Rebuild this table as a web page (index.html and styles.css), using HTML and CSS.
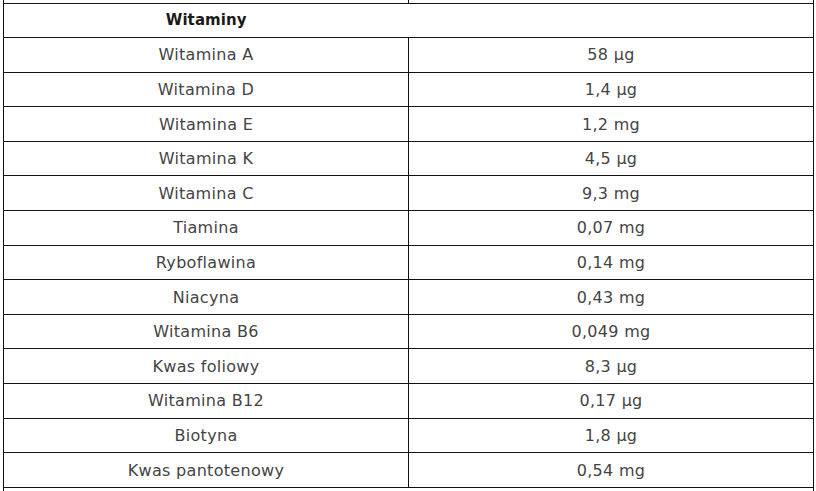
FILE: index.html
```html
<!DOCTYPE html>
<html lang="pl">
<head>
<meta charset="utf-8">
<title>Witaminy</title>
<link rel="stylesheet" href="styles.css">
</head>
<body>
<div class="wrap">
<table class="nutri">
  <tr class="stub"><td></td><td></td></tr>
  <tr class="head"><th class="noline">Witaminy</th><th></th></tr>
  <tr><td>Witamina A</td><td>58 µg</td></tr>
  <tr><td>Witamina D</td><td>1,4 µg</td></tr>
  <tr><td>Witamina E</td><td>1,2 mg</td></tr>
  <tr><td>Witamina K</td><td>4,5 µg</td></tr>
  <tr><td>Witamina C</td><td>9,3 mg</td></tr>
  <tr><td>Tiamina</td><td>0,07 mg</td></tr>
  <tr><td>Ryboflawina</td><td>0,14 mg</td></tr>
  <tr><td>Niacyna</td><td>0,43 mg</td></tr>
  <tr><td>Witamina B6</td><td>0,049 mg</td></tr>
  <tr><td>Kwas foliowy</td><td>8,3 µg</td></tr>
  <tr><td>Witamina B12</td><td>0,17 µg</td></tr>
  <tr><td>Biotyna</td><td>1,8 µg</td></tr>
  <tr><td>Kwas pantotenowy</td><td>0,54 mg</td></tr>
  <tr class="head"><th class="noline"></th><th></th></tr>
</table>
</div>
</body>
</html>
```
FILE: styles.css
```css
html, body {
  margin: 0;
  padding: 0;
  background: #ffffff;
}
.wrap {
  height: 491px;
  overflow: hidden;
  padding-left: 3px;
  padding-right: 2px;
}
.nutri {
  width: 100%;
  border-collapse: collapse;
  font-family: "DejaVu Sans", sans-serif;
  font-size: 16px;
  letter-spacing: 0.3px;
  color: #444444;
  table-layout: fixed;
}
.nutri td, .nutri th {
  border: 1px solid #111;
  text-align: center;
  vertical-align: middle;
  padding: 0;
  width: 50%;
}
.nutri tr {
  height: 34.6px;
}
.nutri tr.stub {
  height: 3px;
}
.nutri tr.stub td {
  border-top: none;
}
.nutri th {
  font-size: 15px;
  font-weight: 700;
  color: #1a1a1a;
  letter-spacing: 0.1px;
}
.nutri th.noline {
  border-right: none;
}
.nutri th + th {
  border-left: none;
}
```
